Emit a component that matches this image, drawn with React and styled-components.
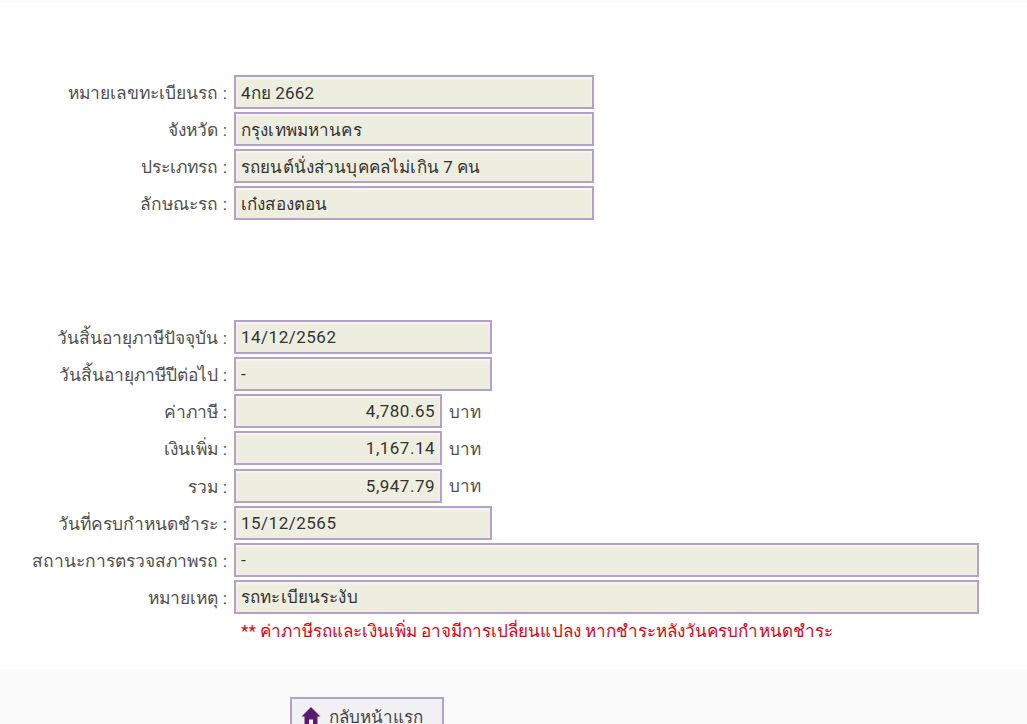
import React from 'react';
import styled, { createGlobalStyle } from 'styled-components';

const GlobalStyle = createGlobalStyle`
  html, body {
    margin: 0;
    padding: 0;
    background: #fff;
    font-family: Roboto, "Noto Sans", "DejaVu Sans", sans-serif;
  }
`;

const vehicle = [
  { label: 'หมายเลขทะเบียนรถ :', value: '4กย 2662' },
  { label: 'จังหวัด :', value: 'กรุงเทพมหานคร' },
  { label: 'ประเภทรถ :', value: 'รถยนต์นั่งส่วนบุคคลไม่เกิน 7 คน' },
  { label: 'ลักษณะรถ :', value: 'เก๋งสองตอน' },
];

const tax = [
  { label: 'วันสิ้นอายุภาษีปัจจุบัน :', value: '14/12/2562', size: 'mid', digits: true },
  { label: 'วันสิ้นอายุภาษีปีต่อไป :', value: '-', size: 'mid' },
  { label: 'ค่าภาษี :', value: '4,780.65', size: 'small', unit: 'บาท', digits: true },
  { label: 'เงินเพิ่ม :', value: '1,167.14', size: 'small', unit: 'บาท', digits: true },
  { label: 'รวม :', value: '5,947.79', size: 'small', unit: 'บาท', digits: true },
  { label: 'วันที่ครบกำหนดชำระ :', value: '15/12/2565', size: 'mid', digits: true },
  { label: 'สถานะการตรวจสภาพรถ :', value: '-', size: 'full' },
  { label: 'หมายเหตุ :', value: 'รถทะเบียนระงับ', size: 'full' },
];

const widths = { small: 208, mid: 258, wide: 360, full: 745 };

const Field = ({ label, value, size = 'wide', unit, digits }) => (
  <Row>
    <Label>{label}</Label>
    <ValueBox $size={size} $right={!!unit} $digits={digits}>{value}</ValueBox>
    {unit && <Unit>{unit}</Unit>}
  </Row>
);

const HomeIcon = () => (
  <svg width="20" height="18" viewBox="0 0 20 18">
    <path d="M10 0 L0.5 9.5 L3.5 9.5 V18 H8 V12.5 H12 V18 H16.5 V9.5 L19.5 9.5 Z" fill="#5c1a6e" />
  </svg>
);

const App = () => (
  <>
    <GlobalStyle />
    <Page>
      <TopBar />
      <Section $top={72}>
        {vehicle.map(f => <Field key={f.label} {...f} />)}
      </Section>
      <Section $top={100} $gap={3.15}>
        {tax.map(f => <Field key={f.label} {...f} />)}
        <Notice>** ค่าภาษีรถและเงินเพิ่ม อาจมีการเปลี่ยนแปลง หากชำระหลังวันครบกำหนดชำระ</Notice>
      </Section>
      <Footer>
        <HomeButton><HomeIcon />กลับหน้าแรก</HomeButton>
      </Footer>
    </Page>
  </>
);

const Page = styled.div`
  height: 724px;
  overflow: hidden;
  display: flex;
  flex-direction: column;
`;

const TopBar = styled.div`
  flex-shrink: 0;
  height: 3px;
  background: #fafafa;
`;

const Section = styled.div`
  flex-shrink: 0;
  display: flex;
  flex-direction: column;
  gap: ${props => props.$gap || 3}px;
  margin-top: ${props => props.$top}px;
`;

const Row = styled.div`
  display: flex;
  align-items: center;
  height: 34px;
`;

const Label = styled.div`
  width: 227px;
  flex-shrink: 0;
  padding-top: 2px;
  text-align: right;
  font-size: 17.4px;
  color: #4f4f4f;
  white-space: nowrap;
`;

const ValueBox = styled.div`
  box-sizing: border-box;
  width: ${props => widths[props.$size]}px;
  height: 34px;
  margin-left: 7px;
  padding: 0 5px;
  display: flex;
  align-items: center;
  justify-content: ${props => (props.$right ? 'flex-end' : 'flex-start')};
  border: 2px solid #b59fcb;
  background: #eeeee0;
  box-shadow: inset 0 2px 2px #f7f7f0;
  font-size: 17px;
  letter-spacing: ${props => (props.$digits ? '0.5px' : '0.15px')};
  color: #333;
  white-space: nowrap;
`;

const Unit = styled.div`
  margin-left: 7px;
  font-size: 17px;
  color: #4f4f4f;
`;

const Notice = styled.div`
  margin-left: 241px;
  font-size: 17.1px;
  letter-spacing: 0.04px;
  line-height: 28px;
  color: #e0000f;
  white-space: nowrap;
`;

const Footer = styled.div`
  flex: 1;
  min-height: 0;
  overflow: hidden;
  margin-top: 24px;
  padding: 28px 0 0 290px;
  background: #fafafa;
`;

const HomeButton = styled.div`
  box-sizing: border-box;
  width: 154px;
  height: 38px;
  padding-left: 9px;
  display: flex;
  align-items: center;
  gap: 8px;
  border: 2px solid #b59fcb;
  background: #f1f0f3;
  font-size: 17px;
  color: #444;
`;

export default App;
